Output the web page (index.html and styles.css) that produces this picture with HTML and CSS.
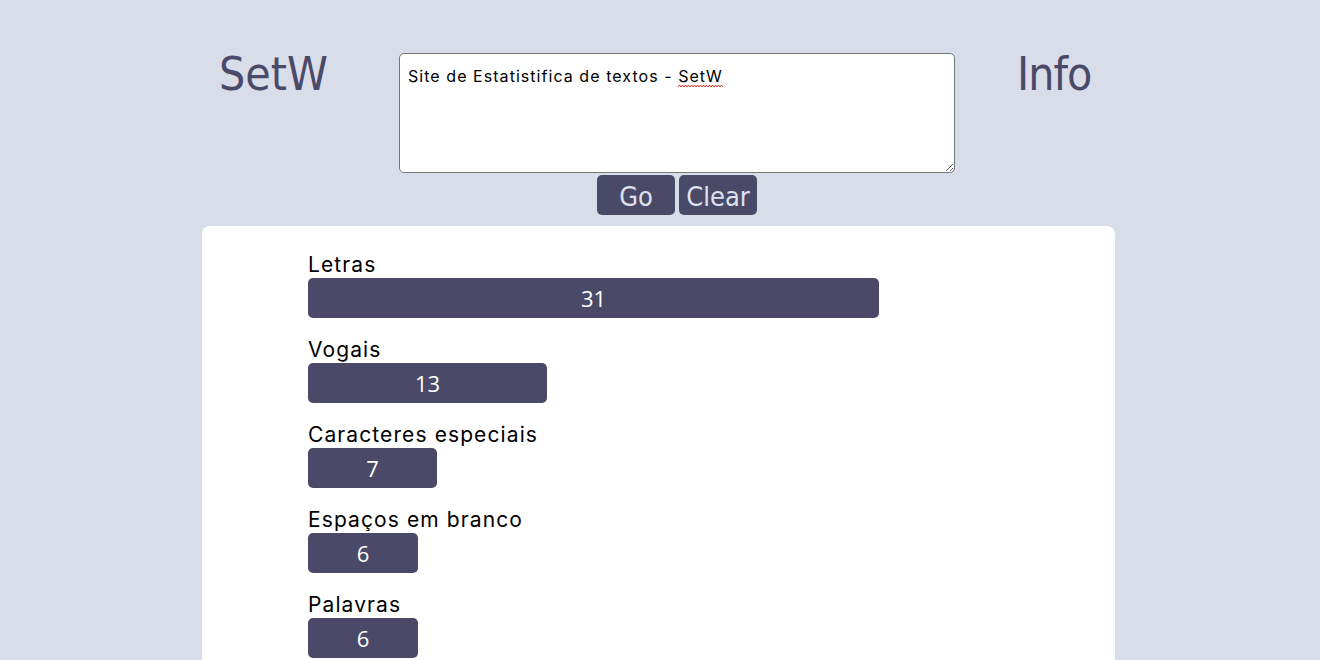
FILE: index.html
```html
<!DOCTYPE html>
<html lang="pt">
<head>
<meta charset="utf-8">
<title>SetW</title>
<link rel="stylesheet" href="styles.css">
</head>
<body>
<header class="top">
  <div class="brand-col"><h1 class="brand">SetW</h1></div>
  <div class="input-col">
    <div class="input-wrap">
      <textarea class="text-input" spellcheck="false">Site de Estatistifica de textos - SetW</textarea>
      <svg class="spell" width="46" height="4" viewBox="0 0 46 4" aria-hidden="true"><path d="M0 3 L1.5 1 L3 3 L4.5 1 L6 3 L7.5 1 L9 3 L10.5 1 L12 3 L13.5 1 L15 3 L16.5 1 L18 3 L19.5 1 L21 3 L22.5 1 L24 3 L25.5 1 L27 3 L28.5 1 L30 3 L31.5 1 L33 3 L34.5 1 L36 3 L37.5 1 L39 3 L40.5 1 L42 3 L43.5 1 L45 3" fill="none" stroke="#e02020" stroke-width="0.9"/></svg>
    </div>
    <div class="actions">
      <button class="btn">Go</button>
      <button class="btn">Clear</button>
    </div>
  </div>
  <div class="info-col"><h2 class="info">Info</h2></div>
</header>
<main class="card">
  <div class="stat">
    <div class="stat-label">Letras</div>
    <div class="bar" style="width:571px">31</div>
  </div>
  <div class="stat">
    <div class="stat-label">Vogais</div>
    <div class="bar" style="width:239px">13</div>
  </div>
  <div class="stat">
    <div class="stat-label">Caracteres especiais</div>
    <div class="bar" style="width:129px">7</div>
  </div>
  <div class="stat">
    <div class="stat-label">Espaços em branco</div>
    <div class="bar" style="width:110px">6</div>
  </div>
  <div class="stat">
    <div class="stat-label">Palavras</div>
    <div class="bar" style="width:110px">6</div>
  </div>
</main>
</body>
</html>
```
FILE: styles.css
```css
html, body {
  margin: 0;
  padding: 0;
}
body {
  background: #d9dce9;
  font-family: "Inter", "Noto Sans", sans-serif;
  height: 660px;
  overflow: hidden;
}
.top {
  display: flex;
  align-items: flex-start;
  margin-left: 202px;
  width: 913px;
  padding-top: 53px;
}
.brand-col {
  width: 197px;
  padding-left: 17px;
  box-sizing: border-box;
}
.brand, .info {
  margin: -2px 0 0;
  font-family: "DejaVu Sans Condensed", "DejaVu Sans", sans-serif;
  font-weight: normal;
  color: #4a4a68;
  font-size: 46px;
  line-height: 46px;
  letter-spacing: 0;
}
.info {
  letter-spacing: -1px;
}
.input-col {
  width: 556px;
  display: flex;
  flex-direction: column;
  align-items: center;
}
.input-wrap {
  position: relative;
  width: 556px;
}
.text-input {
  display: block;
  width: 556px;
  height: 120px;
  box-sizing: border-box;
  border: 1px solid #767676;
  border-radius: 5px;
  padding: 12px 8px;
  font-family: "Inter", sans-serif;
  font-size: 16px;
  letter-spacing: 1.05px;
  color: #000;
  background: #fff;
  margin: 0;
  resize: vertical;
}
.spell {
  position: absolute;
  left: 279px;
  top: 31px;
  display: block;
}
.actions {
  display: flex;
  gap: 4px;
  margin-top: 2px;
}
.btn {
  width: 78px;
  height: 40px;
  border: none;
  border-radius: 5px;
  background: #4a4a68;
  color: #dfe2ee;
  font-family: "DejaVu Sans Condensed", "DejaVu Sans", sans-serif;
  font-size: 27px;
  padding: 3px 0 0;
  line-height: 37px;
}
.info-col {
  width: 160px;
  padding-left: 62px;
  box-sizing: border-box;
}
.card {
  margin: 11px 0 0 202px;
  width: 913px;
  height: 500px;
  background: #fff;
  border-radius: 8px;
  padding: 26px 0 0 106px;
  box-sizing: border-box;
  display: flex;
  flex-direction: column;
  gap: 20px;
}
.stat-label {
  font-size: 21px;
  line-height: 26px;
  letter-spacing: 1.1px;
  color: #000;
}
.bar {
  height: 40px;
  background: #4a4a68;
  color: #fff;
  border-radius: 5px;
  font-family: "Open Sans", sans-serif;
  font-size: 22px;
  line-height: 40px;
  text-align: center;
}
.stat + .stat {
  margin-top: -1px;
}
```
